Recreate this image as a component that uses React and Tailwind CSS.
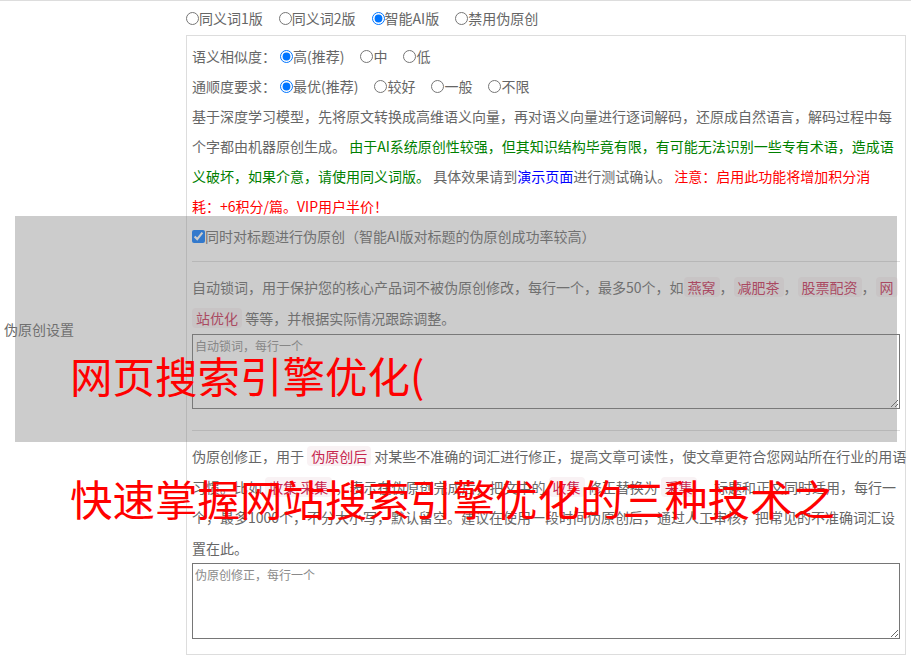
import { useState } from "react";

const Radio = ({ name, label, checked, onChange, className = "" }) => (
  <label className={`flex items-center mr-[16px] ${className}`}>
    <input
      type="radio"
      name={name}
      checked={checked}
      onChange={onChange}
      className="m-0 w-[13px] h-[13px]"
    />
    <span>{label}</span>
  </label>
);

const Chip = ({ children }) => (
  <span className="bg-[#f9f2f4] text-[#c7254e] px-[4px] rounded-[4px]">{children}</span>
);

const RadioGroup = ({ name, options, value, setValue }) => (
  <div className="flex items-center">
    {options.map((opt) => (
      <Radio
        key={opt}
        name={name}
        label={opt}
        checked={value === opt}
        onChange={() => setValue(opt)}
      />
    ))}
  </div>
);

export default function App() {
  const [mode, setMode] = useState("智能AI版");
  const [similar, setSimilar] = useState("高(推荐)");
  const [fluency, setFluency] = useState("最优(推荐)");
  const [titleToo, setTitleToo] = useState(true);

  return (
    <div className="relative w-[911px] h-[658px] overflow-hidden bg-white text-[14px] text-[#666] font-['Noto_Sans_CJK_SC',sans-serif]">
      <div className="flex h-full border-t border-[#ddd]">
        {/* label column */}
        <div className="w-[186px] shrink-0 flex items-center pl-[4px]">伪原创设置</div>

        <div className="flex-1">
          <div className="h-[34px] flex items-center">
            <RadioGroup
              name="mode"
              options={["同义词1版", "同义词2版", "智能AI版", "禁用伪原创"]}
              value={mode}
              setValue={setMode}
            />
          </div>

          <div className="w-[720px] border border-[#ddd] pt-[5px] pb-[15px] px-[5px]">
            <div className="flex items-center h-[30px]">
              <span className="mr-[4px]">语义相似度：</span>
              <RadioGroup
                name="similar"
                options={["高(推荐)", "中", "低"]}
                value={similar}
                setValue={setSimilar}
              />
            </div>
            <div className="flex items-center h-[30px]">
              <span className="mr-[4px]">通顺度要求：</span>
              <RadioGroup
                name="fluency"
                options={["最优(推荐)", "较好", "一般", "不限"]}
                value={fluency}
                setValue={setFluency}
              />
            </div>

            <p className="leading-[30px] whitespace-nowrap">
              基于深度学习模型，先将原文转换成高维语义向量，再对语义向量进行逐词解码，还原成自然语言，解码过程中每
              <br />
              个字都由机器原创生成。{" "}
              <span className="text-[#008000]">
                由于AI系统原创性较强，但其知识结构毕竟有限，有可能无法识别一些专有术语，造成语
                <br />
                义破坏，如果介意，请使用同义词版。
              </span>{" "}
              具体效果请到<span className="text-[#0000ff]">演示页面</span>进行测试确认。{" "}
              <span className="text-[#ff0000]">
                注意：启用此功能将增加积分消
                <br />
                耗：+6积分/篇。VIP用户半价！
              </span>
            </p>

            <label className="flex items-center h-[30px]">
              <input
                type="checkbox"
                checked={titleToo}
                onChange={(e) => setTitleToo(e.target.checked)}
                className="m-0 w-[13px] h-[13px]"
              />
              <span>同时对标题进行伪原创（智能AI版对标题的伪原创成功率较高）</span>
            </label>

            <div className="mt-[10px] border-t border-[#ddd]" />

            <p className="mt-[10px] leading-[31px] whitespace-nowrap">
              自动锁词，用于保护您的核心产品词不被伪原创修改，每行一个，最多50个，如<Chip>燕窝</Chip>，
              <Chip>减肥茶</Chip>，<Chip>股票配资</Chip>，<Chip>网</Chip>
              <br />
              <Chip>站优化</Chip> 等等，并根据实际情况跟踪调整。
            </p>
            <textarea
              placeholder="自动锁词，每行一个"
              className="block w-full h-[75px] border border-[#767676] bg-white p-[2px] text-[12px] placeholder:text-[#8a8a8a] outline-none"
            />

            <div className="mt-[21px] border-t border-[#ddd]" />

            <p className="mt-[10px] leading-[30.5px] whitespace-nowrap">
              伪原创修正，用于 <Chip>伪原创后</Chip> 对某些不准确的词汇进行修正，提高文章可读性，使文章更符合您网站所在行业的用语
              <br />
              习惯。比如 <Chip>收集 采集</Chip> ，表示在伪原创完成后，把文中的 <Chip>收集</Chip> 修正替换为 <Chip>采集</Chip> ，标题和正文同时适用，每行一
              <br />
              个，最多1000个，不分大小写，默认留空。建议在使用一段时间伪原创后，通过人工审核，把常见的不准确词汇设
              <br />
              置在此。
            </p>
            <textarea
              placeholder="伪原创修正，每行一个"
              className="block w-full h-[76px] border border-[#767676] bg-white p-[2px] text-[12px] placeholder:text-[#8a8a8a] outline-none"
            />
          </div>
        </div>
      </div>

      {/* dimmed highlight over the title / lock-word block */}
      <div className="absolute left-[15px] top-[216px] w-[882px] h-[226px] bg-[rgba(128,128,128,0.4)]" />

      <div className="absolute left-[70px] top-[354px] text-[42.5px] leading-none text-[#ff0000] whitespace-nowrap">
        网页搜索引擎优化(
      </div>
      <div className="absolute left-[70px] top-[477px] text-[42.5px] leading-none text-[#ff0000] whitespace-nowrap">
        快速掌握网站搜索引擎优化的三种技术之
      </div>
    </div>
  );
}
